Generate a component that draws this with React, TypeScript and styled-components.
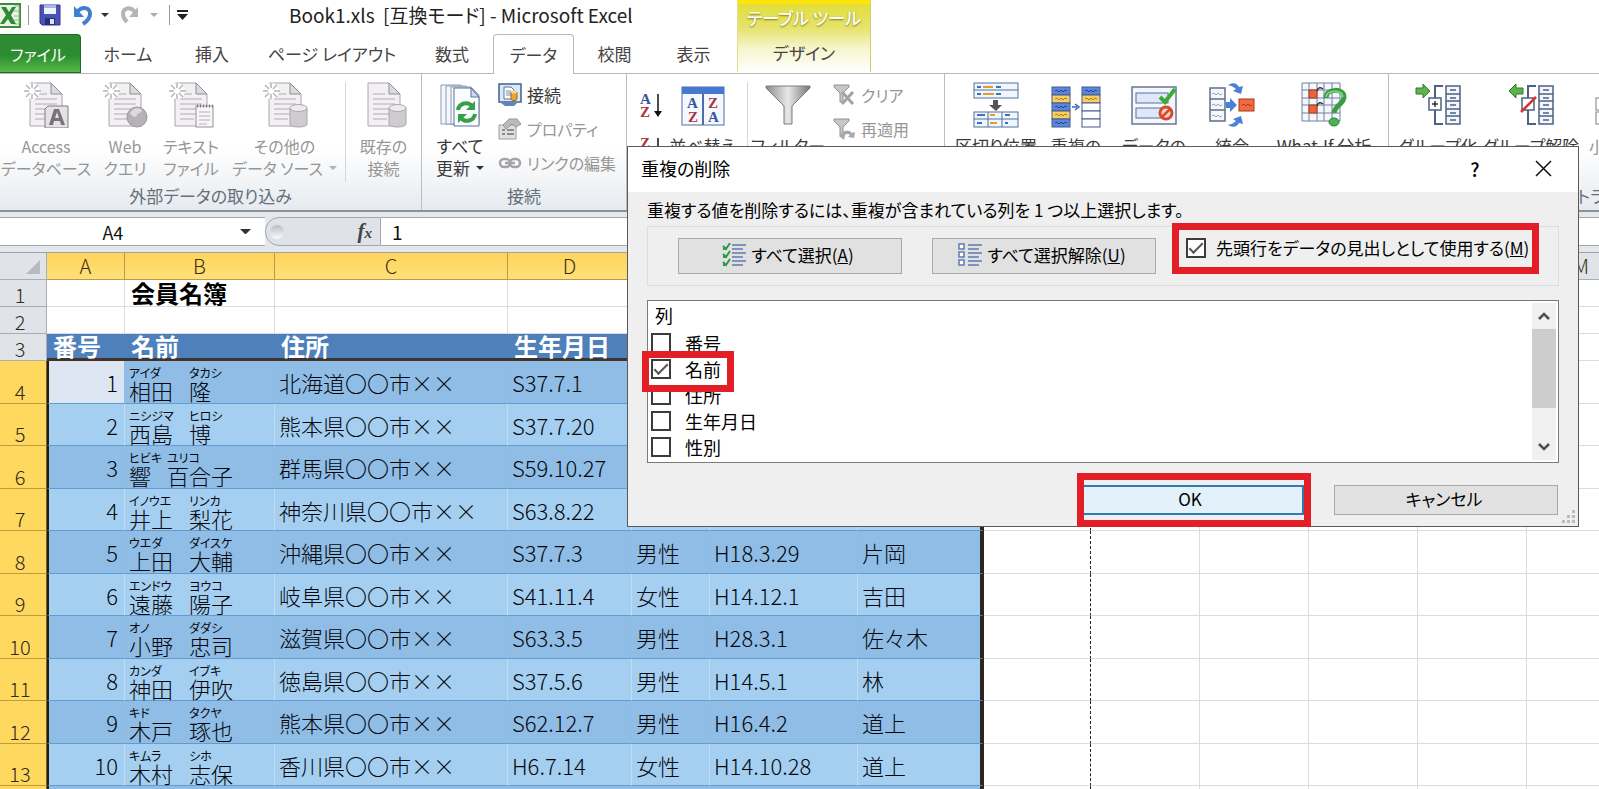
import React from "react";
import styled, { createGlobalStyle, css } from "styled-components";

const UI_FONT = '"Noto Sans CJK JP", "Noto Sans", sans-serif';

const GlobalStyle = createGlobalStyle`
  *, *::before, *::after { box-sizing: border-box; }
  body {
    margin: 0;
    overflow: hidden;
    background: #fff;
    color: #333;
    font-family: ${UI_FONT};
    font-feature-settings: "palt";
  }
  button, input { font: inherit; color: inherit; font-feature-settings: inherit; }
`;

const Window = styled.main`
  position: relative;
  display: flex;
  flex-direction: column;
  height: 100vh;
  overflow: hidden;
`;

/* ---------- title bar and tabs ---------- */

const Head = styled.header`
  display: flex;
  flex: none;
  height: 74px;
  border-bottom: 1px solid #b4b8bd;
`;

const HeadMain = styled.div`
  display: flex;
  flex-direction: column;
  width: 737px;
`;

const TitleBar = styled.div`
  display: flex;
  align-items: center;
  height: 34px;
  padding-bottom: 4px;
`;

const QuickBar = styled.div`
  display: flex;
  align-items: center;
  width: 289px;
  height: 30px;
`;

const QuickButton = styled.button<{ $w: number; $edge?: boolean }>`
  display: flex;
  align-items: center;
  justify-content: ${(p) => (p.$edge ? "flex-start" : "center")};
  width: ${(p) => p.$w}px;
  height: 28px;
  padding: 0;
  border: 0;
  background: none;
`;

const QuickLine = styled.span<{ $gap?: boolean }>`
  width: 1px;
  height: 20px;
  margin-left: ${(p) => (p.$gap ? 6 : 0)}px;
  background: #9a9a9a;
`;

const Title = styled.h1`
  margin: 0;
  font-size: 19px;
  font-weight: 400;
  line-height: 28px;
  white-space: pre;
  color: #222;
`;

const Tabs = styled.nav`
  display: flex;
  height: 40px;
`;

const Tab = styled.button<{ $w: number; $kind?: "file" | "active" }>`
  width: ${(p) => p.$w}px;
  height: 39px;
  padding: 0;
  border: 0;
  background: none;
  font-size: 17px;
  line-height: 36px;
  white-space: nowrap;
  color: #444;
  ${(p) =>
    p.$kind === "file" &&
    css`
      padding-right: 4px;
      border: 1px solid #1d6b26;
      border-left: 0;
      border-radius: 0 4px 0 0;
      background: linear-gradient(#2f8a35, #2b8c2f 55%, #58b947);
      font-size: 16px;
      color: #fff;
    `}
  ${(p) =>
    p.$kind === "active" &&
    css`
      height: 40px;
      margin-left: 4px;
      border: 1px solid #b4b8bd;
      border-bottom: 0;
      border-radius: 4px 4px 0 0;
      background: #fff;
    `}
`;

const ContextTabs = styled.div`
  display: flex;
  flex-direction: column;
  align-items: center;
  width: 134px;
  height: 72px;
  border-top: 4px solid #fde40a;
  border-left: 1px solid #e0de8a;
  border-right: 1px solid #d0cd70;
  background: linear-gradient(#e2de3a, #e6e36c 35%, #f6f5cb 65%, #fff);
`;

const ContextTitle = styled.span`
  height: 30px;
  font-size: 17px;
  font-weight: 500;
  line-height: 28px;
  white-space: nowrap;
  color: #fff;
  text-shadow: 0 1px 2px #77761c;
`;

/* ---------- ribbon ---------- */

const Ribbon = styled.section`
  display: flex;
  flex: none;
  height: 138px;
  overflow: hidden;
  border-bottom: 2px solid #8d9299;
  background: linear-gradient(#fff, #fff 55%, #e6eaef);
`;

const Group = styled.div<{ $w: number }>`
  display: flex;
  flex: none;
  flex-direction: column;
  width: ${(p) => p.$w}px;
  border-right: 1px solid #b9bec5;
`;

const GroupBody = styled.div<{ $pad?: number }>`
  display: flex;
  height: 109px;
  padding-left: ${(p) => p.$pad ?? 0}px;
`;

const GroupLabel = styled.div`
  font-size: 17px;
  line-height: 26px;
  text-align: center;
  white-space: nowrap;
  color: #66707c;
`;

const BigButton = styled.button<{ $w: number; $off?: boolean }>`
  display: flex;
  flex: none;
  flex-direction: column;
  align-items: center;
  width: ${(p) => p.$w}px;
  padding: 8px 0 0;
  border: 0;
  background: none;
  font-size: ${(p) => (p.$off ? 16 : 17)}px;
  line-height: 22px;
  white-space: nowrap;
  color: ${(p) => (p.$off ? "#969696" : "#3a3a3a")};
  svg { flex: none; }
  svg.big { margin-bottom: 7px; }
`;

const ButtonLine = styled.span`
  display: flex;
  align-items: center;
  gap: 6px;
`;

const SortStack = styled.div`
  display: flex;
  flex: none;
  flex-direction: column;
  gap: 16px;
  width: 19px;
  padding-top: 18px;
`;

const SortButton = styled.button`
  display: flex;
  width: 26px;
  height: 28px;
  padding: 0;
  border: 0;
  background: none;
`;

const SideList = styled.div<{ $w: number; $pad?: number }>`
  display: flex;
  flex: none;
  flex-direction: column;
  width: ${(p) => p.$w}px;
  padding: 4px 0 0 ${(p) => p.$pad ?? 0}px;
`;

const SideButton = styled.button<{ $off?: boolean }>`
  display: flex;
  align-items: center;
  gap: 5px;
  height: 34px;
  padding: 0;
  border: 0;
  background: none;
  font-size: ${(p) => (p.$off ? 16 : 17)}px;
  line-height: 22px;
  white-space: nowrap;
  color: ${(p) => (p.$off ? "#969696" : "#3a3a3a")};
`;

const Divider = styled.span`
  flex: none;
  width: 1px;
  height: 100px;
  margin-top: 8px;
  background: #d3d6da;
`;

/* ---------- formula bar ---------- */

const FormulaBar = styled.section`
  display: flex;
  flex: none;
  height: 41px;
  padding: 5px 0 6px;
  border-bottom: 1px solid #9da2a8;
  background: #e4e7ec;
`;

const BarCell = styled.div<{ $w?: number }>`
  display: flex;
  align-items: center;
  flex: ${(p) => (p.$w ? "none" : "1")};
  width: ${(p) => (p.$w ? p.$w + "px" : "auto")};
  border-top: 1px solid #a4a8ae;
  border-bottom: 1px solid #a4a8ae;
  background: #fff;
`;

const NameInput = styled.input`
  width: 230px;
  height: 24px;
  padding: 0;
  border: 0;
  outline: 0;
  background: none;
  font-size: 18px;
  text-align: center;
  color: #111;
`;

const ArrowButton = styled.button`
  display: flex;
  align-items: center;
  justify-content: center;
  width: 40px;
  height: 24px;
  padding: 0;
  border: 0;
  background: none;
`;

const FunctionCell = styled.div`
  display: flex;
  flex: none;
  align-items: center;
  justify-content: space-between;
  width: 116px;
  padding: 0 8px 0 4px;
  border: 1px solid #a4a8ae;
  border-radius: 14px 0 0 14px;
  background: #dfe3e8;
`;

const Knob = styled.span`
  width: 14px;
  height: 14px;
  border-radius: 50%;
  background: linear-gradient(#b9bdc3, #fbfbfc);
`;

const FunctionButton = styled.button`
  padding: 0;
  border: 0;
  background: none;
  font-family: "Liberation Serif", serif;
  font-size: 21px;
  font-style: italic;
  font-weight: 700;
  line-height: 24px;
  color: #444;
  small { font-size: 15px; }
`;

const FormulaInput = styled.input`
  width: 100%;
  height: 24px;
  padding: 0 11px;
  border: 0;
  outline: 0;
  background: none;
  font-size: 19px;
  color: #111;
`;

/* ---------- sheet ---------- */

const SheetArea = styled.section`
  flex: 1;
  min-height: 0;
  overflow: hidden;
`;

const Sheet = styled.table`
  width: max-content;
  table-layout: fixed;
  border-spacing: 0;
  font-feature-settings: normal;
  th, td { padding: 0; white-space: nowrap; }
`;

const ColHead = styled.th<{ $on?: boolean }>`
  height: 27px;
  border-right: 1px solid ${(p) => (p.$on ? "#b99a45" : "#a9aeb5")};
  border-bottom: 1px solid ${(p) => (p.$on ? "#b99a45" : "#a9aeb5")};
  background: ${(p) => (p.$on ? "linear-gradient(#ffd45a, #ffe07a)" : "#e0e3e8")};
  font-size: 20px;
  font-weight: 300;
  line-height: 26px;
  color: #3a2f14;
`;

const CornerHead = styled(ColHead)`
  vertical-align: bottom;
  text-align: right;
  svg { display: block; margin: 0 6px 5px auto; }
`;

const RowHead = styled.th<{ $on?: boolean }>`
  && { padding-right: 6px; }
  border-right: 1px solid ${(p) => (p.$on ? "#7a6224" : "#a9aeb5")};
  border-bottom: 1px solid ${(p) => (p.$on ? "#c09c3a" : "#a9aeb5")};
  background: ${(p) => (p.$on ? "#ffd85f" : "#e0e3e8")};
  font-size: 20px;
  font-weight: 300;
  line-height: 23px;
  vertical-align: bottom;
  text-align: center;
  color: #2f2a1c;
`;

const PlainRow = styled.tr`
  height: 27px;
`;

const DataRow = styled.tr<{ $h: number }>`
  height: ${(p) => p.$h}px;
`;

const Cell = styled.td<{ $pageEnd?: boolean }>`
  border-right: 1px ${(p) => (p.$pageEnd ? "dashed #222" : "solid #dcdcdc")};
  border-bottom: 1px solid #dcdcdc;
`;

const SheetTitle = styled(Cell)`
  && { padding-left: 6px; }
  font-size: 24px;
  font-weight: 700;
  line-height: 24px;
  color: #000;
`;

const FieldHead = styled.th`
  && { padding-left: 6px; }
  border-bottom: 3px solid #40342a;
  background: #4e80bb;
  font-size: 24px;
  font-weight: 700;
  line-height: 24px;
  text-align: left;
  color: #fff;
`;

const Data = styled.td<{ $dark: boolean; $first?: boolean; $active?: boolean; $last?: boolean }>`
  && { padding-left: 4px; padding-right: ${(p) => (p.$first ? 6 : 0)}px; }
  border-right: ${(p) =>
    p.$last ? "4px solid #2b2520" : p.$dark ? "1px solid #8dbbe4" : "1px solid #bfdcf2"};
  border-left: ${(p) => (p.$first ? "2px solid #221d14" : "0")};
  border-bottom: 1px solid #619bd2;
  background: ${(p) => (p.$active ? "#dce5f1" : p.$dark ? "#8fbde6" : "#a4cff1")};
  font-size: 22px;
  font-weight: 300;
  line-height: 26px;
  text-align: ${(p) => (p.$first ? "right" : "left")};
  color: #05070d;
`;

const NameData = styled(Data)`
  vertical-align: top;
`;

const FullName = styled.div`
  display: flex;
  gap: 16px;
  padding-top: 5px;
`;

const NamePart = styled.span`
  display: flex;
  flex-direction: column;
  line-height: 22px;
`;

const Reading = styled.span`
  width: 0;
  font-size: 12px;
  font-weight: 400;
  line-height: 13px;
  font-feature-settings: "palt";
`;

/* ---------- dialog ---------- */

const Dialog = styled.section`
  position: absolute;
  top: 146px;
  left: 627px;
  right: 20px;
  border: 1px solid #5a5a5a;
  background: #efefef;
  font-size: 17px;
  color: #000;
`;

const DialogHead = styled.div`
  display: flex;
  align-items: center;
  height: 45px;
  padding: 0 20px 3px 13px;
  background: #fff;
`;

const DialogTitle = styled.h2`
  flex: 1;
  margin: 0;
  font-size: 18px;
  font-weight: 400;
  line-height: 26px;
`;

const HeadButton = styled.button`
  display: flex;
  align-items: center;
  justify-content: center;
  width: 30px;
  height: 30px;
  margin-left: 38px;
  padding: 0;
  border: 0;
  background: none;
  font-size: 19px;
  font-weight: 500;
`;

const DialogBody = styled.div`
  padding: 0 19px 11px;
`;

const Message = styled.p`
  margin: 0;
  padding-top: 2px;
  line-height: 32px;
  white-space: nowrap;
`;

const OptionBox = styled.div`
  display: flex;
  align-items: flex-start;
  gap: 30px;
  height: 60px;
  padding: 11px 34px 0 30px;
  border: 1px solid #dcdcdc;
`;

const PushButton = styled.button<{ $main?: boolean; $tall?: boolean }>`
  display: flex;
  flex: none;
  align-items: center;
  justify-content: center;
  gap: 5px;
  width: 224px;
  height: ${(p) => (p.$tall ? 36 : 30)}px;
  padding: 0 4px 2px 0;
  border: ${(p) => (p.$main ? "2px solid #2f79b5" : "1px solid #a9a9a9")};
  background: ${(p) => (p.$main ? "#e3f1fb" : "#e1e1e1")};
  line-height: 26px;
  white-space: nowrap;
  color: #000;
`;

/* Thick red outline that draws attention to the control it surrounds. */
const outline = css<{ $inset?: string }>`
  position: relative;
  &::after {
    content: "";
    position: absolute;
    inset: ${(p) => p.$inset};
    border: 7px solid #e41e26;
    pointer-events: none;
  }
`;

const CheckLabel = styled.label<{ $inset?: string; $wide?: boolean }>`
  display: flex;
  align-items: center;
  gap: ${(p) => (p.$wide ? 10 : 14)}px;
  flex: ${(p) => (p.$wide ? 1 : "none")};
  min-width: 0;
  height: ${(p) => (p.$wide ? 20 : 26)}px;
  line-height: 20px;
  white-space: nowrap;
  ${(p) => p.$inset && outline}
`;

const Check = styled.input.attrs({ type: "checkbox" })`
  appearance: none;
  flex: none;
  display: grid;
  place-items: center;
  width: 20px;
  height: 20px;
  margin: 0;
  border: 2px solid #3c3c3c;
  background: #fff;
  &:checked::after {
    content: "";
    width: 14px;
    height: 7px;
    margin-bottom: 4px;
    border: solid #555;
    border-width: 0 0 2px 2px;
    transform: rotate(-45deg);
  }
`;

const ListBox = styled.div`
  display: flex;
  height: 163px;
  margin-top: 14px;
  border: 1px solid #7a7a7a;
  background: #fff;
`;

const ListItems = styled.div`
  display: flex;
  flex: 1;
  flex-direction: column;
  align-items: flex-start;
  padding-left: 3px;
`;

const ListTitle = styled.div`
  padding-left: 4px;
  font-size: 18px;
  line-height: 29px;
`;

const ListItem = styled(CheckLabel)`
  width: 110px;
  font-size: 18px;
`;

const Scroll = styled.div`
  display: flex;
  flex-direction: column;
  width: 24px;
  margin: 2px;
  background: #f0f0f0;
`;

const ScrollButton = styled.button`
  display: flex;
  align-items: center;
  justify-content: center;
  height: 26px;
  padding: 0;
  border: 0;
  background: none;
`;

const Thumb = styled.div`
  height: 79px;
  margin-bottom: auto;
  background: #cdcdcd;
`;

const Actions = styled.div`
  display: flex;
  justify-content: flex-end;
  gap: 30px;
  margin-top: 22px;
  padding-right: 1px;
`;

const Outlined = styled.span<{ $inset: string }>`
  ${outline}
`;

const Grip = styled.svg`
  position: absolute;
  right: 3px;
  bottom: 3px;
`;

/* ---------- icons ---------- */

const Down = ({ c = "#333", s = 10 }: { c?: string; s?: number }) => (
  <svg width={s} height={s / 2} viewBox="0 0 10 5"><path d="M0 0h10L5 5z" fill={c} /></svg>
);

const ExcelIcon = () => (
  <svg width="22" height="25" viewBox="0 0 22 25">
    <rect x="-4" y="1" width="24" height="23" fill="#e8f3e2" stroke="#3c8a3c" strokeWidth="2" />
    <path d="M14 3h5v18h-5M14 8h5M14 13h5M14 17h5" stroke="#8fc08a" fill="none" />
    <path d="M1 4h5l3 5 3-5h4l-5 8 5 9h-5l-3-5-4 5H0l6-9z" fill="#2f8a35" />
  </svg>
);

const SaveIcon = () => (
  <svg width="22" height="22" viewBox="0 0 22 22">
    <path d="M1 1h20v20H3l-2-2z" fill="#4853b5" stroke="#333b8c" />
    <path d="M5 1h12v9H5z" fill="#eef2fb" /><path d="M5 1h12v3H5z" fill="#a7b6e8" />
    <path d="M6 14h10v7H6z" fill="#27307a" /><path d="M11 15h4v5h-4z" fill="#dfe4f5" />
  </svg>
);

const UndoIcon = () => (
  <svg width="20" height="22" viewBox="0 0 20 22">
    <path d="M4 8c5-6 13-5 13 2 0 5-4 8-7 10" fill="none" stroke="#3f7fd0" strokeWidth="4" />
    <path d="M1 2v11h10z" fill="#3f7fd0" />
  </svg>
);

const RedoIcon = () => (
  <svg width="20" height="20" viewBox="0 0 20 20">
    <path d="M15 7C10 1 3 3 3 9c0 4 2 6 4 8" fill="none" stroke="#b5b5b5" strokeWidth="4" />
    <path d="M18 2v10H9z" fill="#b5b5b5" />
  </svg>
);

const CustomizeIcon = () => (
  <svg width="11" height="10" viewBox="0 0 11 10"><path d="M0 0h11v2H0zM0 4h11L5.500 10z" fill="#222" /></svg>
);

type SourceKind = "access" | "web" | "text" | "db" | "plain";

const SourceIcon = ({ kind }: { kind: SourceKind }) => (
  <svg className="big" width="46" height="46" viewBox="0 0 46 46">
    <path d="M7 1h21l11 11v32H7z" fill="#f3f0f3" stroke="#a9a5aa" />
    <path d="M28 1v11h11z" fill="#ddd9de" stroke="#908d92" />
    <path d="M12 17h22M12 22h22M12 27h22M12 32h18M12 37h14M12 12h12" stroke="#c6c1c8" strokeWidth="1.500" />
    {kind !== "plain" && (
      <>
        <circle cx="9" cy="9" r="8" fill="#fff" />
        <path d="M9 1v5M9 12v5M1 9h5M12 9h6M3 3l4 4M15 3l-4 4M3 15l4-4M15 15l-4-4" stroke="#b8b4ba" strokeWidth="1.500" />
      </>
    )}
    {kind === "access" && (
      <>
        <path d="M25 24h20v22H22V27z" fill="#e4e2e5" stroke="#7f7c81" />
        <path d="M31 27h5l6 16h-4l-1-4h-6l-1 4h-4zM32 36h4l-2-6z" fill="#777479" />
      </>
    )}
    {kind === "web" && (
      <>
        <circle cx="35" cy="35" r="10" fill="#b5b1b6" stroke="#9b979c" />
        <path d="M28 31c3-5 8-6 12-3-1 4-4 2-5 5s-5 2-7-2z" fill="#dedbdf" />
      </>
    )}
    {kind === "text" && (
      <>
        <rect x="28" y="24" width="17" height="21" fill="#f7f5f7" stroke="#979398" />
        <path d="M29 24h16" stroke="#777" strokeWidth="3" strokeDasharray="1 2" />
        <path d="M31 30h11M31 34h11M31 38h11M31 42h8" stroke="#b4b0b5" />
      </>
    )}
    {(kind === "db" || kind === "plain") && (
      <>
        <path d="M28 26v16c0 4 17 4 17 0V26z" fill="#cfcbd0" stroke="#aaa6ab" />
        <ellipse cx="36.500" cy="26" rx="8.500" ry="3.500" fill="#eeebef" stroke="#aaa6ab" />
      </>
    )}
  </svg>
);

const RefreshIcon = () => (
  <svg className="big" width="46" height="46" viewBox="0 0 46 46">
    {[0, 5, 10].map((x, i) => (
      <path key={x} d={`M${4 + x} ${3 + i}h20l8 8v${31 - i}H${4 + x}z`} fill="#f4f7fc" stroke="#8a9bb8" />
    ))}
    <path d="M17 6h17l8 9v29H17z" fill="#fafcff" stroke="#5b7296" />
    <path d="M34 6v9h8z" fill="#cfdaec" stroke="#5b7296" />
    <path d="M21 28c1-7 10-9 14-4" fill="none" stroke="#35a045" strokeWidth="4" />
    <path d="M38 19v9h-9z" fill="#35a045" />
    <path d="M38 32c-1 7-10 9-14 4" fill="none" stroke="#35a045" strokeWidth="4" />
    <path d="M21 41v-9h9z" fill="#35a045" />
  </svg>
);

const ConnectIcon = () => (
  <svg width="24" height="24" viewBox="0 0 24 24">
    <rect x="1" y="1" width="22" height="18" fill="#dce9f8" stroke="#3f5f8f" strokeWidth="1.500" />
    <path d="M6 4h7l3 3v9H6z" fill="#fff" stroke="#5b7296" /><path d="M8 8h5M8 10h5M8 12h5" stroke="#6f8cb5" />
    <path d="M13 9v7c0 2 6 2 6 0V9z" fill="#e8a53a" stroke="#9c6a1c" /><ellipse cx="16" cy="9" rx="3" ry="1.500" fill="#f8d58e" />
    <path d="M3 20h16l-3 3H7z" fill="#5e84bd" />
  </svg>
);

const PropertyIcon = () => (
  <svg width="24" height="22" viewBox="0 0 24 22">
    <path d="M1 7h17v14H1z" fill="#e2e0e2" stroke="#a09ca1" /><path d="M4 12h3M4 16h3M9 12h7M9 16h7" stroke="#8d898e" strokeWidth="2" />
    <path d="M5 7l6-6h8l4 5-5 3-4-3-6 5z" fill="#bdb9be" stroke="#99959a" />
  </svg>
);

const LinkIcon = () => (
  <svg width="24" height="14" viewBox="0 0 24 14">
    <g fill="none" stroke="#a5a1a6" strokeWidth="2.500"><rect x="2" y="3" width="10" height="8" rx="4" /><rect x="12" y="3" width="10" height="8" rx="4" /><path d="M7 7h10" /></g>
  </svg>
);

const SerifLetter = ({ x, y, c, t }: { x: number; y: number; c: string; t: string }) => (
  <text x={x} y={y} fill={c} fontFamily="Liberation Serif, serif" fontWeight="700" fontSize="15">{t}</text>
);

const AzIcon = ({ flip = false }: { flip?: boolean }) => (
  <svg width="26" height="28" viewBox="0 0 26 28">
    <SerifLetter x={1} y={12} c={flip ? "#a8353a" : "#35569c"} t={flip ? "Z" : "A"} />
    <SerifLetter x={1} y={25} c={flip ? "#35569c" : "#a8353a"} t={flip ? "A" : "Z"} />
    <path d="M19 2v20" stroke="#111" strokeWidth="1.500" /><path d="M15 19h8l-4 6z" fill="#111" />
  </svg>
);

const SortIcon = () => (
  <svg className="big" width="46" height="46" viewBox="0 0 46 46">
    <rect x="2" y="5" width="42" height="38" fill="#f5f9ff" stroke="#4d6fa8" />
    <rect x="2" y="5" width="42" height="7" fill="#4678cf" />
    <path d="M23 12v31" stroke="#4d6fa8" strokeWidth="2" />
    <SerifLetter x={7} y={26} c="#35569c" t="A" /><SerifLetter x={8} y={40} c="#a8353a" t="Z" />
    <SerifLetter x={28} y={26} c="#a8353a" t="Z" /><SerifLetter x={28} y={40} c="#35569c" t="A" />
  </svg>
);

const FunnelIcon = () => (
  <svg className="big" width="46" height="46" viewBox="0 0 46 46">
    <defs><linearGradient id="funnel"><stop offset="0" stopColor="#8b8b8b" /><stop offset=".5" stopColor="#e8e8e8" /><stop offset="1" stopColor="#757575" /></linearGradient></defs>
    <path d="M1 4h44v2L27 24v18h-8V24L1 6z" fill="url(#funnel)" stroke="#7d7d7d" />
  </svg>
);

const SmallFunnel = ({ again = false }: { again?: boolean }) => (
  <svg width="23" height="24" viewBox="0 0 23 24">
    <path d="M1 2h15v2l-6 6v9H7v-9L1 4z" fill="#c9c6ca" stroke="#949095" />
    {again
      ? <path d="M8 17c3-4 8-5 11-1l3-1-1 6-6-1 2-2c-2-2-5-1-6 1zM6 19l6-1-1 5z" fill="#aaa6ab" />
      : <path d="M9 9l11 12M20 9L9 21" stroke="#a5a1a6" strokeWidth="3" />}
  </svg>
);

const SplitIcon = () => (
  <svg className="big" width="46" height="46" viewBox="0 0 46 46">
    <rect x="1" y="1" width="44" height="15" fill="#f0f6fd" stroke="#54719c" /><path d="M1 8h44" stroke="#54719c" />
    <path d="M4 5h4M23 5h5M4 12h4M23 12h5" stroke="#3f6fc0" strokeWidth="2" /><path d="M10 5h10M10 12h11" stroke="#e29a3a" strokeWidth="2" />
    <path d="M20 18h5v5h4l-6 6-7-6h4z" fill="#555" />
    <rect x="1" y="30" width="44" height="15" fill="#f0f6fd" stroke="#54719c" /><path d="M1 37h44M15 30v15M29 30v15" stroke="#54719c" />
    <path d="M4 33h8M32 33h5M4 41h5M32 41h3" stroke="#3f6fc0" strokeWidth="2" /><path d="M17 33h5M17 41h7" stroke="#e29a3a" strokeWidth="2" />
  </svg>
);

const DuplicateIcon = () => {
  const blue = "#5b86dd";
  const gold = "#f8cf63";
  const box = (x: number, y: number, f: string) => (
    <g key={`${x}-${y}`}>
      <rect x={x} y={y} width="18" height="8" fill={f} stroke="#47598c" />
      {f !== "#fff" && <path d={`M${x + 3} ${y + 4}l2-1 2 2 2-2 2 2 2-2 2 1`} fill="none" stroke={f === blue ? "#24418c" : "#b3761a"} />}
    </g>
  );
  return (
    <svg className="big" width="50" height="46" viewBox="0 0 50 46">
      {[blue, gold, blue, gold, blue].map((f, i) => box(1, 5 + i * 8, f))}
      {[blue, gold, "#fff", "#fff", "#fff"].map((f, i) => box(31, 5 + i * 8, f))}
      <path d="M21 25h5M24 22l4 3-4 3" fill="none" stroke="#3567b8" strokeWidth="1.500" />
    </svg>
  );
};

const ValidateIcon = () => (
  <svg className="big" width="46" height="46" viewBox="0 0 46 46">
    <rect x="1" y="5" width="44" height="37" fill="#f3f6fb" stroke="#667793" strokeWidth="1.500" />
    <rect x="5" y="11" width="32" height="10" fill="#dfe8f8" stroke="#5471a0" /><rect x="5" y="26" width="32" height="10" fill="#dfe8f8" stroke="#5471a0" />
    <path d="M29 15l5 5L44 7" fill="none" stroke="#3daa35" strokeWidth="4" />
    <circle cx="35" cy="31" r="6" fill="#f3d6cc" stroke="#d9482b" strokeWidth="3" /><path d="M31 35l8-8" stroke="#d9482b" strokeWidth="2.500" />
  </svg>
);

const ConsolidateIcon = () => (
  <svg className="big" width="46" height="46" viewBox="0 0 46 46">
    <path d="M1 6h15v33H1zM1 17h15M1 28h15" fill="#f5f7fb" stroke="#5f6f8d" strokeWidth="1.500" />
    <path d="M3 12l2-1 2 2 2-2 2 2 2-1M3 23l2-1 2 2 2-2 2 2 2-1M3 34l2-1 2 2 2-2 2 2 2-1" fill="none" stroke="#9aa4b8" />
    <path d="M17 20h4v-4l7 7-7 7v-4h-4z" fill="#4a80d8" />
    <path d="M19 3c5-3 9-2 11 2l4-1-2 8-8-3 3-2c-2-2-4-3-8-4zM19 43c5 3 9 2 11-2l4 1-2-8-8 3 3 2c-2 2-4 3-8 4z" fill="#4a80d8" />
    <rect x="30" y="17" width="15" height="12" fill="#f36a42" stroke="#a53a1c" /><path d="M33 23l2-1 2 2 2-2 2 2 2-1" fill="none" stroke="#a53a1c" />
  </svg>
);

const WhatIfIcon = () => (
  <svg className="big" width="48" height="46" viewBox="0 0 48 46">
    <path d="M2 1h38v38H2zM2 8h38M2 16h38M2 23h38M2 31h38M9 1v38M17 1v38M24 1v38M32 1v38" fill="#f4f7fc" stroke="#70819e" />
    <path d="M9 8h8v8H9zM9 23h8v8H9z" fill="#f0603a" stroke="#a53a1c" />
    <path d="M17 9c1-4 4-4 6-2M17 24c1-4 4-4 6-2" fill="none" stroke="#333" strokeWidth="1.500" />
    <path d="M26 16c0-10 18-10 18-1 0 7-9 8-10 16" fill="none" stroke="#3d9b48" strokeWidth="5" />
    <path d="M26 15c1-7 15-8 17 0" fill="none" stroke="#7fd07f" strokeWidth="2" />
    <ellipse cx="34" cy="40" rx="5" ry="4" fill="#4bb356" stroke="#2b7a35" />
  </svg>
);

const OutlineIcon = ({ kind }: { kind: "group" | "ungroup" | "subtotal" }) => {
  const c = kind === "subtotal" ? "#aaa6ab" : "#4c6283";
  return (
    <svg className="big" width="46" height="46" viewBox="0 0 46 46">
      <path d="M31 4h14v38H31zM31 12h14M31 19h14M31 27h14M31 34h14" fill="#f3f7fd" stroke={c} strokeWidth="1.500" />
      <path d="M35 8h6M35 16h6M35 23h6M35 31h6M35 38h6" stroke={c} strokeWidth="1.500" />
      <path d="M28 4h-8v38h8" fill="none" stroke={c} strokeWidth="2" />
      <rect x="14" y="16" width="12" height="12" fill="#fff" stroke={c} strokeWidth="1.500" />
      {kind !== "ungroup" && <path d="M20 19v6M17 22h6" stroke={kind === "group" ? "#333" : c} strokeWidth="1.500" />}
      {kind === "group" && <path d="M1 6h7V2l7 7-7 7v-4H1z" fill="#5cb54b" stroke="#2d7a28" />}
      {kind === "ungroup" && (
        <>
          <path d="M15 6H8V2L1 9l7 7v-4h7z" fill="#5cb54b" stroke="#2d7a28" />
          <path d="M13 30l15-15" stroke="#d5342b" strokeWidth="2.500" />
        </>
      )}
      {kind === "subtotal" && (
        <>
          <rect x="14" y="30" width="12" height="12" fill="#fff" stroke={c} strokeWidth="1.500" />
          <path d="M20 33v6M17 36h6" stroke={c} strokeWidth="1.500" />
        </>
      )}
    </svg>
  );
};

const ListIcon = ({ checked }: { checked: boolean }) => (
  <svg width="24" height="24" viewBox="0 0 24 24">
    {[1, 9, 17].map((y) => (
      <g key={y}>
        {checked
          ? <path d={`M1 ${y + 2}l3 3 4-6M1 ${y + 5}h3`} fill="none" stroke="#2c9a45" strokeWidth="2" />
          : <rect x="1" y={y} width="5" height="5" fill="#fff" stroke="#6079ad" strokeWidth="1.500" />}
        <path d={`M10 ${y + 1}h14M10 ${y + 5}h11`} stroke="#7f93bb" strokeWidth="2" />
      </g>
    ))}
  </svg>
);

const Chevron = ({ up = false }: { up?: boolean }) => (
  <svg width="12" height="8" viewBox="0 0 12 8">
    <path d={up ? "M1 7l5-5 5 5" : "M1 1l5 5 5-5"} fill="none" stroke="#505050" strokeWidth="2.500" />
  </svg>
);

/* ---------- data ---------- */

type Part = [string, string];
interface Member {
  name: Part[];
  address: string;
  birth: string;
  sex?: string;
  joined?: string;
  staff?: string;
}

const members: Member[] = [
  { name: [["相田", "アイダ"], ["隆", "タカシ"]], address: "北海道〇〇市××", birth: "S37.7.1" },
  { name: [["西島", "ニシジマ"], ["博", "ヒロシ"]], address: "熊本県〇〇市××", birth: "S37.7.20" },
  { name: [["響", "ヒビキ"], ["百合子", "ユリコ"]], address: "群馬県〇〇市××", birth: "S59.10.27" },
  { name: [["井上", "イノウエ"], ["梨花", "リンカ"]], address: "神奈川県〇〇市××", birth: "S63.8.22" },
  { name: [["上田", "ウエダ"], ["大輔", "ダイスケ"]], address: "沖縄県〇〇市××", birth: "S37.7.3", sex: "男性", joined: "H18.3.29", staff: "片岡" },
  { name: [["遠藤", "エンドウ"], ["陽子", "ヨウコ"]], address: "岐阜県〇〇市××", birth: "S41.11.4", sex: "女性", joined: "H14.12.1", staff: "吉田" },
  { name: [["小野", "オノ"], ["忠司", "ダダシ"]], address: "滋賀県〇〇市××", birth: "S63.3.5", sex: "男性", joined: "H28.3.1", staff: "佐々木" },
  { name: [["神田", "カンダ"], ["伊吹", "イブキ"]], address: "徳島県〇〇市××", birth: "S37.5.6", sex: "男性", joined: "H14.5.1", staff: "林" },
  { name: [["木戸", "キド"], ["琢也", "タクヤ"]], address: "熊本県〇〇市××", birth: "S62.12.7", sex: "男性", joined: "H16.4.2", staff: "道上" },
  { name: [["木村", "キムラ"], ["志保", "シホ"]], address: "香川県〇〇市××", birth: "H6.7.14", sex: "女性", joined: "H14.10.28", staff: "道上" },
];

const columns = [
  { id: "A", w: 78 }, { id: "B", w: 150 }, { id: "C", w: 233 }, { id: "D", w: 124 },
  { id: "E", w: 78 }, { id: "F", w: 148 }, { id: "G", w: 126 }, { id: "H", w: 107 },
  { id: "I", w: 109 }, { id: "J", w: 109 }, { id: "K", w: 109 }, { id: "L", w: 109 }, { id: "M", w: 109 },
];
const outer = ["H", "I", "J", "K", "L", "M"];

const OuterCells = () => <>{outer.map((id) => <Cell key={id} $pageEnd={id === "H"} />)}</>;

const fields = ["番号", "名前", "住所", "生年月日", "性別"];

/* ---------- parts ---------- */

const SourceButton = ({ kind, w, lines, menu }: { kind: SourceKind; w: number; lines: [string, string]; menu?: boolean }) => (
  <BigButton $w={w} $off>
    <SourceIcon kind={kind} />
    <span>{lines[0]}</span>
    <ButtonLine>{lines[1]}{menu && <Down c="#b0b0b0" s={8} />}</ButtonLine>
  </BigButton>
);

const RibbonView = () => (
  <Ribbon>
    <Group $w={422}>
      <GroupBody>
        <SourceButton kind="access" w={92} lines={["Access", "データベース"]} />
        <SourceButton kind="web" w={66} lines={["Web", "クエリ"]} />
        <SourceButton kind="text" w={66} lines={["テキスト", "ファイル"]} />
        <SourceButton kind="db" w={121} lines={["その他の", "データ ソース"]} menu />
        <Divider />
        <SourceButton kind="plain" w={75} lines={["既存の", "接続"]} />
      </GroupBody>
      <GroupLabel>外部データの取り込み</GroupLabel>
    </Group>
    <Group $w={205}>
      <GroupBody>
        <BigButton $w={76}>
          <RefreshIcon />
          <span>すべて</span>
          <ButtonLine>更新<Down s={8} /></ButtonLine>
        </BigButton>
        <SideList $w={128}>
          <SideButton><ConnectIcon />接続</SideButton>
          <SideButton $off><PropertyIcon />プロパティ</SideButton>
          <SideButton $off><LinkIcon />リンクの編集</SideButton>
        </SideList>
      </GroupBody>
      <GroupLabel>接続</GroupLabel>
    </Group>
    <Group $w={318}>
      <GroupBody $pad={12}>
        <SortStack>
          <SortButton aria-label="昇順"><AzIcon /></SortButton>
          <SortButton aria-label="降順"><AzIcon flip /></SortButton>
        </SortStack>
        <BigButton $w={89}><SortIcon /><span>並べ替え</span></BigButton>
        <Divider />
        <BigButton $w={80}><FunnelIcon /><span>フィルター</span></BigButton>
        <SideList $w={105} $pad={5}>
          <SideButton $off><SmallFunnel />クリア</SideButton>
          <SideButton $off><SmallFunnel again />再適用</SideButton>
        </SideList>
      </GroupBody>
    </Group>
    <Group $w={444}>
      <GroupBody $pad={10}>
        <BigButton $w={82}><SplitIcon /><span>区切り位置</span></BigButton>
        <BigButton $w={78}><DuplicateIcon /><span>重複の</span></BigButton>
        <BigButton $w={78}><ValidateIcon /><span>データの</span></BigButton>
        <BigButton $w={78}><ConsolidateIcon /><span>統合</span></BigButton>
        <BigButton $w={106}><WhatIfIcon /><span>What-If 分析</span></BigButton>
      </GroupBody>
    </Group>
    <Group $w={404}>
      <GroupBody>
        <BigButton $w={98}><OutlineIcon kind="group" /><span>グループ化</span></BigButton>
        <BigButton $w={88}><OutlineIcon kind="ungroup" /><span>グループ解除</span></BigButton>
        <BigButton $w={60} $off><OutlineIcon kind="subtotal" /><span>小計</span></BigButton>
      </GroupBody>
      <GroupLabel>アウトライン</GroupLabel>
    </Group>
  </Ribbon>
);

const SheetView = () => (
  <Sheet>
    <colgroup>
      <col style={{ width: 47 }} />
      {columns.map((c) => <col key={c.id} style={{ width: c.w }} />)}
    </colgroup>
    <thead>
      <tr>
        <CornerHead><svg width="14" height="14" viewBox="0 0 14 14"><path d="M14 0v14H0z" fill="#b7bbc1" /></svg></CornerHead>
        {columns.map((c, i) => <ColHead key={c.id} $on={i < 7}>{c.id}</ColHead>)}
      </tr>
    </thead>
    <tbody>
      <PlainRow>
        <RowHead>1</RowHead><Cell /><SheetTitle>会員名簿</SheetTitle><Cell /><Cell /><Cell /><Cell /><Cell /><OuterCells />
      </PlainRow>
      <PlainRow>
        <RowHead>2</RowHead><Cell /><Cell /><Cell /><Cell /><Cell /><Cell /><Cell /><OuterCells />
      </PlainRow>
      <PlainRow>
        <RowHead>3</RowHead>
        {["番号", "名前", "住所", "生年月日", "", "", ""].map((f, i) => <FieldHead key={i}>{f}</FieldHead>)}
        <OuterCells />
      </PlainRow>
      {members.map((m, i) => {
        const dark = i % 2 === 0;
        return (
          <DataRow key={i} $h={dark ? 43 : 42}>
            <RowHead $on>{i + 4}</RowHead>
            <Data $dark={dark} $first $active={i === 0}>{i + 1}</Data>
            <NameData $dark={dark}>
              <FullName>
                {m.name.map(([kanji, kana]) => (
                  <NamePart key={kanji}><Reading>{kana}</Reading>{kanji}</NamePart>
                ))}
              </FullName>
            </NameData>
            <Data $dark={dark}>{m.address}</Data>
            <Data $dark={dark}>{m.birth}</Data>
            <Data $dark={dark}>{m.sex}</Data>
            <Data $dark={dark}>{m.joined}</Data>
            <Data $dark={dark} $last>{m.staff}</Data>
            <OuterCells />
          </DataRow>
        );
      })}
      <DataRow $h={43}>
        <RowHead $on />
        <Data $dark $first /><Data $dark /><Data $dark /><Data $dark /><Data $dark /><Data $dark /><Data $dark $last />
        <OuterCells />
      </DataRow>
    </tbody>
  </Sheet>
);

const RemoveDuplicates = () => (
  <Dialog role="dialog" aria-labelledby="dialog-title">
    <DialogHead>
      <DialogTitle id="dialog-title">重複の削除</DialogTitle>
      <HeadButton aria-label="ヘルプ">?</HeadButton>
      <HeadButton aria-label="閉じる">
        <svg width="17" height="17" viewBox="0 0 17 17"><path d="M1 1l15 15M16 1L1 16" stroke="#111" strokeWidth="1.500" /></svg>
      </HeadButton>
    </DialogHead>
    <DialogBody>
      <Message>重複する値を削除するには、重複が含まれている列を 1 つ以上選択します。</Message>
      <OptionBox>
        <PushButton $tall><ListIcon checked /><span>すべて選択(<u>A</u>)</span></PushButton>
        <PushButton $tall><ListIcon checked={false} /><span>すべて選択解除(<u>U</u>)</span></PushButton>
        <CheckLabel $wide $inset="-15px -15px -16px -14px">
          <Check defaultChecked /><span>先頭行をデータの見出しとして使用する(<u>M</u>)</span>
        </CheckLabel>
      </OptionBox>
      <ListBox>
        <ListItems>
          <ListTitle>列</ListTitle>
          {fields.map((f) => (
            <ListItem key={f} $inset={f === "名前" ? "-5px 27px -10px -9px" : undefined}>
              <Check defaultChecked={f === "名前"} />{f}
            </ListItem>
          ))}
        </ListItems>
        <Scroll>
          <ScrollButton aria-label="上へ"><Chevron up /></ScrollButton>
          <Thumb />
          <ScrollButton aria-label="下へ"><Chevron /></ScrollButton>
        </Scroll>
      </ListBox>
      <Actions>
        <Outlined $inset="-12px -7px -12px -3px"><PushButton $main>OK</PushButton></Outlined>
        <PushButton>キャンセル</PushButton>
      </Actions>
    </DialogBody>
    <Grip width="13" height="13" viewBox="0 0 13 13">
      <path d="M10 0h3v3h-3zM5 5h3v3H5zM10 5h3v3h-3zM0 10h3v3H0zM5 10h3v3H5zM10 10h3v3h-3z" fill="#bcbcbc" />
    </Grip>
  </Dialog>
);

export default function App() {
  return (
    <Window>
      <GlobalStyle />
      <Head>
        <HeadMain>
          <TitleBar>
            <QuickBar>
              <QuickButton $w={28} $edge aria-label="Excel"><ExcelIcon /></QuickButton>
              <QuickLine />
              <QuickButton $w={42} aria-label="保存"><SaveIcon /></QuickButton>
              <QuickButton $w={24} aria-label="元に戻す"><UndoIcon /></QuickButton>
              <QuickButton $w={20} aria-label="元に戻す一覧"><Down s={8} /></QuickButton>
              <QuickButton $w={30} aria-label="やり直し"><RedoIcon /></QuickButton>
              <QuickButton $w={18} aria-label="やり直し一覧"><Down c="#aaa" s={8} /></QuickButton>
              <QuickLine $gap />
              <QuickButton $w={24} aria-label="カスタマイズ"><CustomizeIcon /></QuickButton>
            </QuickBar>
            <Title>{"Book1.xls  [互換モード] - Microsoft Excel"}</Title>
          </TitleBar>
          <Tabs>
            <Tab $w={81} $kind="file">ファイル</Tab>
            <Tab $w={94}>ホーム</Tab>
            <Tab $w={74}>挿入</Tab>
            <Tab $w={166}>ページ レイアウト</Tab>
            <Tab $w={74}>数式</Tab>
            <Tab $w={81} $kind="active">データ</Tab>
            <Tab $w={81}>校閲</Tab>
            <Tab $w={77}>表示</Tab>
          </Tabs>
        </HeadMain>
        <ContextTabs>
          <ContextTitle>テーブル ツール</ContextTitle>
          <Tab $w={120}>デザイン</Tab>
        </ContextTabs>
      </Head>
      <RibbonView />
      <FormulaBar>
        <BarCell $w={265}>
          <NameInput aria-label="名前ボックス" defaultValue="A4" />
          <ArrowButton aria-label="名前の一覧"><Down s={11} /></ArrowButton>
        </BarCell>
        <FunctionCell><Knob /><FunctionButton>f<small>x</small></FunctionButton></FunctionCell>
        <BarCell><FormulaInput aria-label="数式バー" defaultValue="1" /></BarCell>
      </FormulaBar>
      <SheetArea><SheetView /></SheetArea>
      <RemoveDuplicates />
    </Window>
  );
}
